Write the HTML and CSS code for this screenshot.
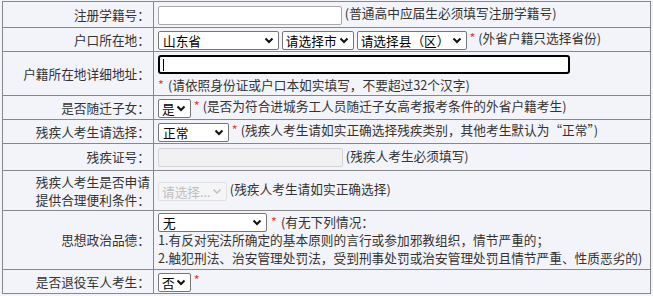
FILE: index.html
```html
<!DOCTYPE html>
<html lang="zh-CN">
<head>
<meta charset="utf-8">
<title>报名信息</title>
<link rel="stylesheet" href="styles.css">
</head>
<body>
<table class="form">
  <tr class="r1">
    <td class="lab">注册学籍号：</td>
    <td class="val"><input type="text" class="inp w184"> <span class="tip">(普通高中应届生必须填写注册学籍号)</span></td>
  </tr>
  <tr class="r2">
    <td class="lab">户口所在地：</td>
    <td class="val">
      <select class="sel w121"><option>山东省</option></select>
      <select class="sel w72"><option>请选择市</option></select>
      <select class="sel w110"><option>请选择县（区）</option></select>
      <span class="req">*</span> <span class="tip">(外省户籍只选择省份)</span>
    </td>
  </tr>
  <tr class="r3">
    <td class="lab">户籍所在地详细地址：</td>
    <td class="val">
      <div class="stack">
        <input type="text" class="inp focus w412">
        <div class="line"><span class="req">*</span> <span class="tip">(请依照身份证或户口本如实填写，不要超过32个汉字)</span></div>
      </div>
    </td>
  </tr>
  <tr class="r4">
    <td class="lab">是否随迁子女：</td>
    <td class="val"><select class="sel w33"><option>是</option></select> <span class="req">*</span> <span class="tip">(是否为符合进城务工人员随迁子女高考报考条件的外省户籍考生)</span></td>
  </tr>
  <tr class="r5">
    <td class="lab">残疾人考生请选择：</td>
    <td class="val"><select class="sel w71"><option>正常</option></select> <span class="req">*</span> <span class="tip">(残疾人考生请如实正确选择残疾类别，其他考生默认为“正常”)</span></td>
  </tr>
  <tr class="r6">
    <td class="lab">残疾证号：</td>
    <td class="val"><input type="text" class="inp w185" disabled> <span class="tip">(残疾人考生必须填写)</span></td>
  </tr>
  <tr class="r7">
    <td class="lab">残疾人考生是否申请<br>提供合理便利条件：</td>
    <td class="val"><select class="sel w69" disabled><option>请选择...</option></select> <span class="tip">(残疾人考生请如实正确选择)</span></td>
  </tr>
  <tr class="r8">
    <td class="lab">思想政治品德：</td>
    <td class="val">
      <div class="stack">
        <div class="line"><select class="sel w109"><option>无</option></select> <span class="req">*</span> <span class="tip">(有无下列情况：</span></div>
        <div class="line tip">1.有反对宪法所确定的基本原则的言行或参加邪教组织，情节严重的；</div>
        <div class="line tip">2.触犯刑法、治安管理处罚法，受到刑事处罚或治安管理处罚且情节严重、性质恶劣的)</div>
      </div>
    </td>
  </tr>
  <tr class="r9">
    <td class="lab">是否退役军人考生：</td>
    <td class="val"><select class="sel w33"><option>否</option></select> <span class="req">*</span></td>
  </tr>
</table>
</body>
</html>
```
FILE: styles.css
```css
html, body {
  margin: 0;
  padding: 0;
  background: #f3f4f9;
}
body {
  font-family: "Noto Sans CJK SC", "Microsoft YaHei", sans-serif;
  font-size: 12.7px;
  color: #333;
  line-height: 18px;
}
.form {
  margin: 1px 0 0 2px;
  width: 649px;
  border-collapse: collapse;
  background: #f3f4f9;
}
.form td {
  border: 1px solid #888;
  padding: 0;
  vertical-align: middle;
}
.lab {
  width: 147px;
  text-align: right;
  padding-right: 3px !important;
  white-space: nowrap;
}
.val {
  padding-left: 4px !important;
  white-space: nowrap;
}
.r1 { height: 26px; }
.r2 { height: 24px; }
.r3 { height: 44px; }
.r4 { height: 24px; }
.r5 { height: 24px; }
.r6 { height: 27px; }
.r7 { height: 40px; }
.r8 { height: 59px; }
.r9 { height: 24px; }

input, select {
  font-family: "Noto Sans CJK SC", "Microsoft YaHei", sans-serif;
  font-size: 12.7px;
  vertical-align: middle;
  box-sizing: border-box;
  margin: 0;
}
.inp {
  height: 19px;
  border: 1px solid #a8a8a8;
  border-radius: 2px;
  background: #fff;
  padding: 0 2px;
}
.inp:disabled {
  background: #f1f1f3;
  border-color: #d2d2d6;
}
.inp.focus {
  border: 2px solid #000;
  border-radius: 3px;
  background: #fff linear-gradient(#000, #000) no-repeat 3px 2px / 1px 12px;
}
.sel {
  -webkit-appearance: none;
  appearance: none;
  height: 19px;
  line-height: 17px;
  border: 1px solid #767676;
  border-radius: 2px;
  background-color: #fff;
  background-image: url("data:image/svg+xml;utf8,<svg xmlns='http://www.w3.org/2000/svg' width='10' height='7' viewBox='0 0 10 7'><path d='M1.5 1.5 L5 5 L8.5 1.5' fill='none' stroke='%23111' stroke-width='2'/></svg>");
  background-repeat: no-repeat;
  background-position: right 4px center;
  background-size: 10px 7px;
  color: #000;
  padding: 0 16px 0 4px;
  overflow: hidden;
  text-overflow: clip;
  white-space: nowrap;
}
.sel:disabled {
  color: #a8a8a8;
  border-color: #d8d8dc;
  background-color: #f6f6f8;
  background-image: url("data:image/svg+xml;utf8,<svg xmlns='http://www.w3.org/2000/svg' width='10' height='7' viewBox='0 0 10 7'><path d='M1.5 1.5 L5 5 L8.5 1.5' fill='none' stroke='%23aaa' stroke-width='1.5'/></svg>");
}
.w33 { width: 33px; padding-left: 3px; padding-right: 0; }
.w69 { width: 69px; padding-left: 3px; padding-right: 12px; }
.w71 { width: 71px; }
.w72 { width: 72px; padding-left: 3px; padding-right: 12px; }
.w109 { width: 109px; }
.w110 { width: 110px; padding-left: 3px; padding-right: 2px; }
.w121 { width: 121px; }
.w184 { width: 184px; }
.w185 { width: 185px; }
.w412 { width: 412px; }
.stack {
  display: flex;
  flex-direction: column;
}
.r3 .stack { gap: 2px; padding-top: 1px; }
.line {
  height: 18px;
  line-height: 18px;
  display: flex;
  align-items: center;
}
.line .sel { margin-right: 4px; }
.line .req { margin-right: 4px; }
.req {
  color: #e8302c;
}
.tip {
  color: #333;
}
```
